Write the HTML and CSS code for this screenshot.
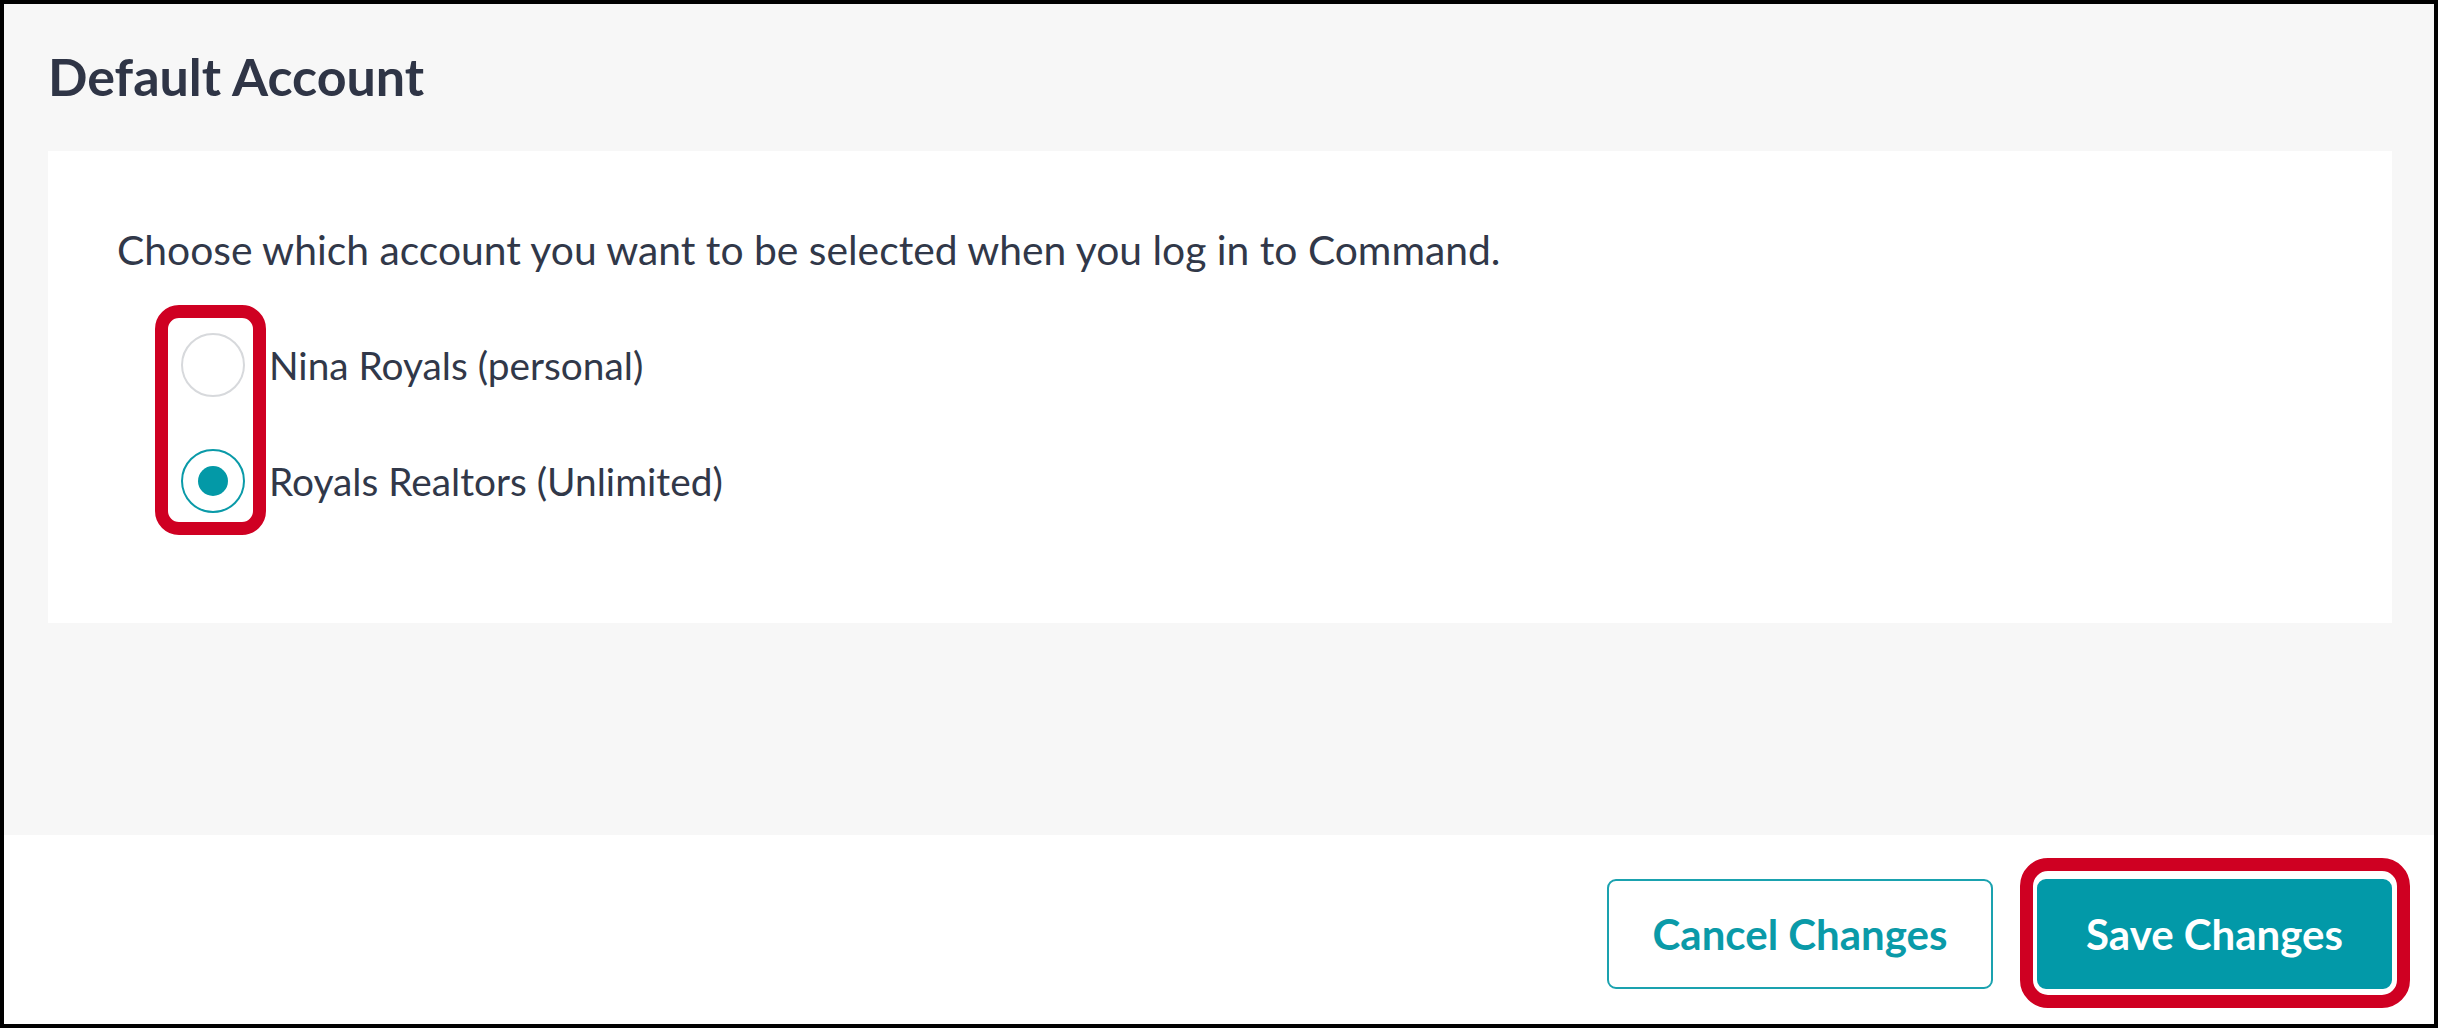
FILE: index.html
```html
<!DOCTYPE html>
<html lang="en">
<head>
<meta charset="utf-8">
<title>Default Account</title>
<link rel="stylesheet" href="styles.css">
</head>
<body>
<div class="frame">
  <section class="settings">
    <h1 class="title">Default Account</h1>
    <div class="card">
      <p class="desc">Choose which account you want to be selected when you log in to Command.</p>
      <div class="options">
        <label class="option">
          <span class="radio"></span>
          <span class="option-text">Nina Royals (personal)</span>
        </label>
        <label class="option">
          <span class="radio radio-checked"></span>
          <span class="option-text">Royals Realtors (Unlimited)</span>
        </label>
        <span class="annot annot-radios"></span>
      </div>
    </div>
  </section>
  <footer class="footer">
    <button class="btn btn-outline" type="button">Cancel Changes</button>
    <span class="save-wrap">
      <button class="btn btn-primary" type="button">Save Changes</button>
      <span class="annot annot-save"></span>
    </span>
  </footer>
</div>
</body>
</html>
```
FILE: styles.css
```css
* { box-sizing: border-box; }
html, body { margin: 0; padding: 0; }
body {
  width: 2438px;
  height: 1028px;
  overflow: hidden;
  background: #ffffff;
  font-family: "Lato", "Open Sans", sans-serif;
  color: #313849;
}
.frame {
  position: relative;
  width: 2438px;
  height: 1028px;
  border: 4px solid #000;
  display: flex;
  flex-direction: column;
  background: #fff;
}
.settings {
  background: #f7f7f7;
  height: 831px;
  padding: 0 42px 0 44px;
}
.title {
  margin: 0;
  padding-top: 41px;
  font-size: 52px;
  line-height: 62px;
  font-weight: 700;
  color: #2f3546;
}
.card {
  margin-top: 44px;
  background: #fff;
  height: 472px;
  padding: 74px 69px 0;
}
.desc {
  margin: 0;
  font-size: 40.8px;
  line-height: 50px;
}
.options {
  position: relative;
  display: flex;
  flex-direction: column;
  gap: 52px;
  margin-top: 58px;
  padding-left: 64px;
}
.option {
  display: flex;
  align-items: center;
  gap: 24px;
  font-size: 38.8px;
  line-height: 48px;
}
.radio {
  width: 64px;
  height: 64px;
  border-radius: 50%;
  border: 2px solid #d7d9dc;
  background: #fff;
  display: flex;
  align-items: center;
  justify-content: center;
  flex: none;
}
.radio-checked { border-color: #0a9aa8; }
.radio-checked::after {
  content: "";
  width: 30px;
  height: 30px;
  border-radius: 50%;
  background: #0399a7;
}
.footer {
  flex: 1;
  display: flex;
  justify-content: flex-end;
  align-items: flex-start;
  gap: 44px;
  padding: 44px 42px 0 0;
}
.btn {
  height: 110px;
  border-radius: 9px;
  font-family: inherit;
  font-size: 42px;
  font-weight: 700;
  padding: 0;
  cursor: pointer;
}
.btn-outline {
  width: 386px;
  background: #fff;
  color: #0a9aa8;
  border: 2px solid #1aa2af;
}
.btn-primary {
  width: 355px;
  background: #0299a8;
  color: #fff;
  border: 2px solid #0299a8;
}
.save-wrap { position: relative; display: block; }
.annot {
  position: absolute;
  border: 13px solid #cf0022;
  pointer-events: none;
}
.annot-radios {
  left: 38px;
  top: -28px;
  width: 111px;
  height: 230px;
  border-radius: 24px;
}
.annot-save {
  left: -17px;
  top: -21px;
  right: -18px;
  bottom: -19px;
  border-radius: 28px;
}
```
